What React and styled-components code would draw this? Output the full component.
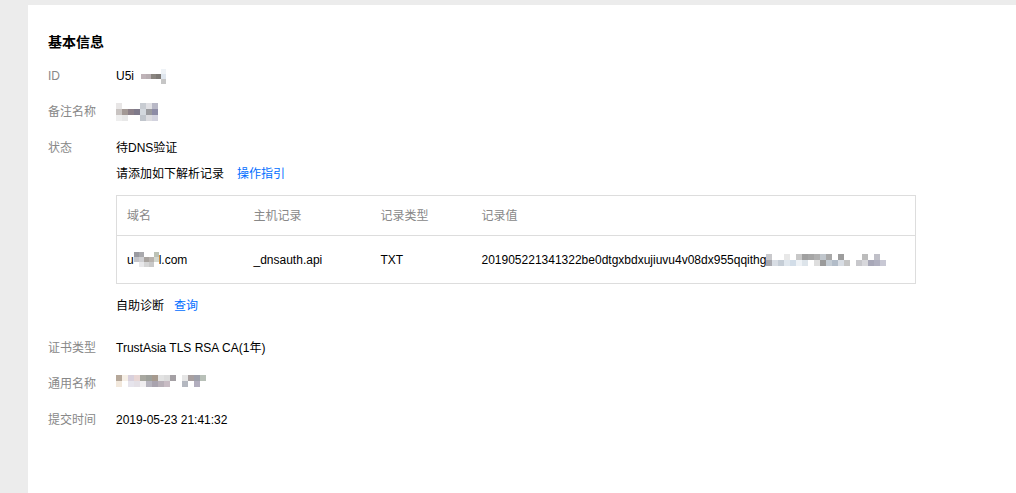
import React from "react";
import styled, { createGlobalStyle } from "styled-components";

const Global = createGlobalStyle`
  html, body { margin: 0; padding: 0; background: #ececec; }
  body { font-family: "Liberation Sans", "Noto Sans CJK SC", sans-serif; font-size: 12px; color: #000; }
`;

const Page = styled.div`
  padding: 5px 0 0 28px;
  height: 493px;
  box-sizing: border-box;
  overflow: hidden;
`;

const Card = styled.div`
  background: #fff;
  height: 100%;
  padding: 27px 20px 0 20px;
  box-sizing: border-box;
`;

const Title = styled.h3`
  margin: 0 0 15px 0;
  font-size: 14px;
  line-height: 20px;
  font-weight: bold;
  color: #000;
`;

const Row = styled.div`
  display: flex;
  line-height: 18px;
  margin-bottom: ${(p) => p.$gap ?? 18}px;
`;

const Label = styled.div`
  width: 68px;
  flex: none;
  color: #888;
`;

const Value = styled.div`
  flex: 1;
  color: #000;
  display: flex;
  flex-direction: column;
`;

const Line = styled.div`
  display: flex;
  align-items: center;
  margin-bottom: ${(p) => p.$mb ?? 0}px;
`;

const Link = styled.a`
  color: #006eff;
  margin-left: ${(p) => p.$ml ?? 12}px;
  text-decoration: none;
  cursor: pointer;
`;

const Table = styled.table`
  width: 800px;
  border-collapse: collapse;
  border: 1px solid #ddd;
  margin-bottom: 13px;
  table-layout: fixed;
`;

const Th = styled.th`
  text-align: left;
  font-weight: normal;
  color: #888;
  height: 40px;
  padding: 0 10px;
  border-bottom: 1px solid #ddd;
  width: ${(p) => (p.$w ? `${p.$w}px` : "auto")};
  box-sizing: border-box;
`;

const Td = styled.td`
  color: #000;
  height: 47px;
  padding: 0 10px;
  white-space: nowrap;
`;

const Cell = styled.span`
  display: inline-flex;
  align-items: center;
`;

const MosaicBox = styled.span`
  display: inline-grid;
  grid-auto-flow: column;
  grid-template-rows: repeat(${(p) => p.$rows}, ${(p) => p.$size}px);
  grid-auto-columns: ${(p) => p.$size}px;
  vertical-align: middle;
`;

const Px = styled.span`
  display: block;
`;

function Mosaic({ cols, size = 6 }) {
  const rows = cols[0].length;
  return (
    <MosaicBox $rows={rows} $size={size}>
      {cols.flat().map((c, i) => (
        <Px key={i} style={{ background: c }} />
      ))}
    </MosaicBox>
  );
}

const W = "#fff";

export default function App() {
  return (
    <>
      <Global />
      <Page>
        <Card>
          <Title>基本信息</Title>
          <Row>
            <Label>ID</Label>
            <Value>
              <Line>
                U5i&nbsp;&nbsp;
                <Mosaic
                  size={5}
                  cols={[
                    [W, "#bfb3b8", W],
                    [W, "#b8aeb2", W],
                    [W, "#8a8580", W],
                    [W, "#7e7a76", W],
                    ["#eef2f6", "#dfe6ee", "#c6c6c6"],
                  ]}
                />
              </Line>
            </Value>
          </Row>
          <Row>
            <Label>备注名称</Label>
            <Value>
              <Line>
                <Mosaic
                  size={6}
                  cols={[
                    ["#e8e6e6", "#c9c4c2", "#eeeeee"],
                    [W, "#a39995", "#e8e8e8"],
                    [W, "#8c8088", W],
                    [W, "#7f7a8a", W],
                    ["#c8ccd2", "#d3d8de", "#c0c5cc"],
                    ["#e0e0e4", "#9a9a9e", "#dcdce0"],
                    ["#b8b8c6", "#8d8ca6", "#d2d2de"],
                  ]}
                />
              </Line>
            </Value>
          </Row>
          <Row $gap={24}>
            <Label>状态</Label>
            <Value>
              <Line $mb={8}>待DNS验证</Line>
              <Line $mb={12}>
                请添加如下解析记录<Link $ml={13}>操作指引</Link>
              </Line>
              <Table>
                <thead>
                  <tr>
                    <Th $w={127}>域名</Th>
                    <Th $w={127}>主机记录</Th>
                    <Th $w={101}>记录类型</Th>
                    <Th>记录值</Th>
                  </tr>
                </thead>
                <tbody>
                  <tr>
                    <Td>
                      <Cell>
                        u
                        <Mosaic
                          size={5}
                          cols={[
                            ["#9a9aa0", "#c4c4c8", W],
                            ["#a9a9ad", "#cfcfd2", "#e8e8ea"],
                            [W, "#a8a39f", "#d5d5d5"],
                            [W, "#b7b2ae", "#c9c9c9"],
                            ["#bcc2b6", "#d4d8d0", W],
                          ]}
                        />
                        l.com
                      </Cell>
                    </Td>
                    <Td>_dnsauth.api</Td>
                    <Td>TXT</Td>
                    <Td>
                      <Cell>
                        201905221341322be0dtgxbdxujiuvu4v08dx955qqithg
                        <Mosaic
                          size={6}
                          cols={[
                            ["#c9c9cc", "#a9a9af"],
                            [W, "#d8dde4"],
                            [W, "#c5cdd6"],
                            ["#e8e8e8", "#e0e7ee"],
                            [W, "#d2dde8"],
                            ["#c8c8c8", "#eef2f6"],
                            ["#a0a0a0", "#dde4ea"],
                            ["#a6a6a6", W],
                            ["#b0b0b0", "#dedede"],
                            ["#c0c6cc", "#9a9a9a"],
                            ["#a8a8a8", "#c4ccd4"],
                            [W, "#b2bcc8"],
                            ["#9d9d9d", "#d8dde4"],
                            [W, "#c5c5c5"],
                            [W, W],
                            [W, "#c8c8cc"],
                            ["#bcbcbc", "#d8d8dc"],
                            [W, "#a8a8b8"],
                            ["#c0c0c8", "#b0b0c0"],
                            [W, "#c8c8d4"],
                          ]}
                        />
                      </Cell>
                    </Td>
                  </tr>
                </tbody>
              </Table>
              <Line>
                自助诊断<Link $ml={10}>查询</Link>
              </Line>
            </Value>
          </Row>
          <Row>
            <Label>证书类型</Label>
            <Value>
              <Line>TrustAsia TLS RSA CA(1年)</Line>
            </Value>
          </Row>
          <Row>
            <Label>通用名称</Label>
            <Value>
              <Line>
                <Mosaic
                  size={6}
                  cols={[
                    ["#b6a89a", "#f2e8dc"],
                    ["#f6efe6", W],
                    ["#d8d0dc", "#e6e4ec"],
                    ["#e8d6d4", "#e4e0e6"],
                    ["#a8a8a0", "#f0eef0"],
                    ["#9ea09a", "#b6b4be"],
                    ["#a69a8e", "#a9a3ae"],
                    ["#e2e2e2", "#b8b0b8"],
                    ["#dcdcdc", "#c8bcc4"],
                    ["#a4a0a4", W],
                    [W, W],
                    ["#e6e6e6", "#b4b8c0"],
                    ["#a8a0a0", W],
                    ["#9ea0aa", "#b2aebe"],
                    ["#b8c0b8", W],
                  ]}
                />
              </Line>
            </Value>
          </Row>
          <Row>
            <Label>提交时间</Label>
            <Value>
              <Line>2019-05-23 21:41:32</Line>
            </Value>
          </Row>
        </Card>
      </Page>
    </>
  );
}
